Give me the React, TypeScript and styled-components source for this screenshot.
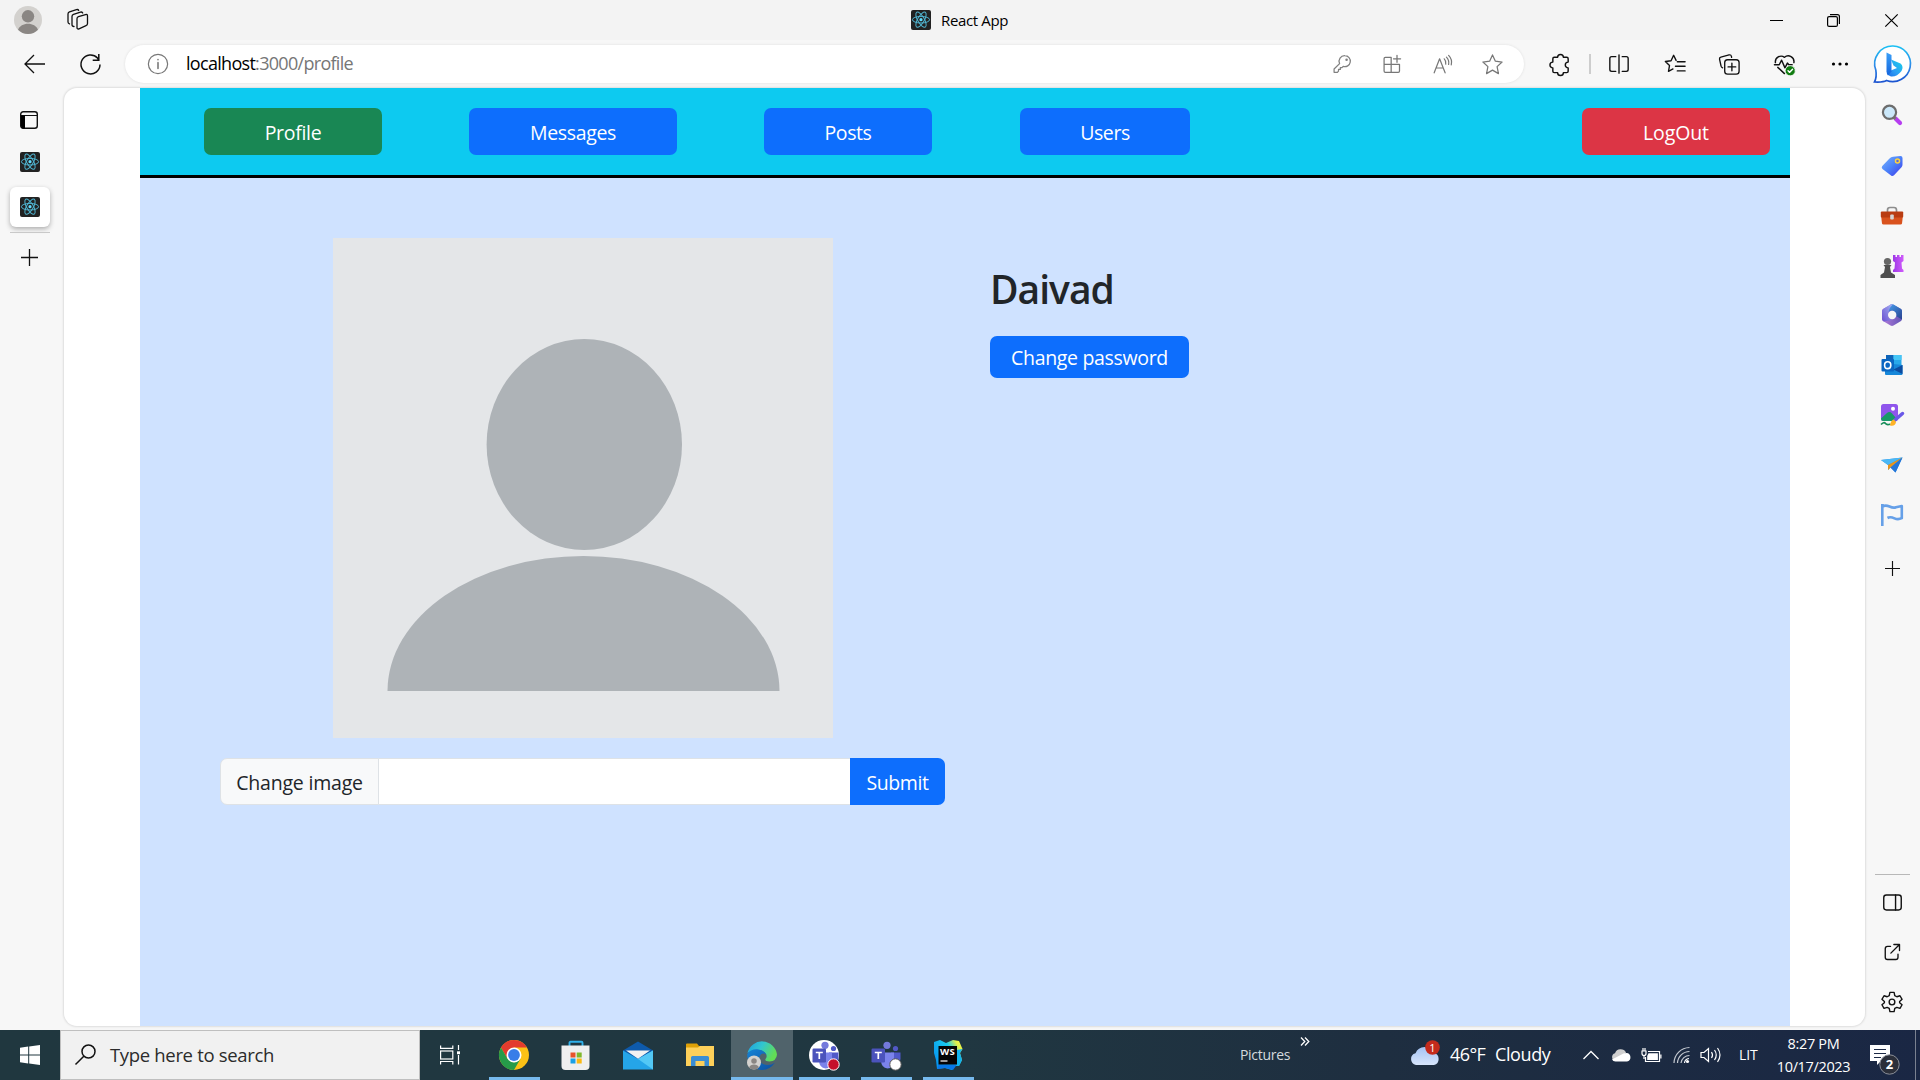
import React from "react";
import styled, { createGlobalStyle } from "styled-components";

const GlobalStyle = createGlobalStyle`
  *, *::before, *::after { box-sizing: border-box; }
  html, body { margin: 0; padding: 0; overflow: hidden; }
  body {
    font-family: "Segoe UI", "Open Sans", "Noto Sans", sans-serif;
    color: #000;
  }
  button, input { font-family: inherit; }
  svg { display: block; flex: none; overflow: visible; }
`;

const Screen = styled.div`
  width: 1920px;
  height: 1080px;
  display: flex;
  flex-direction: column;
  background: #f7f7f7;
`;

const Slot = styled.div<{ $w?: number; $h?: number }>`
  width: ${(p) => (p.$w ? p.$w + "px" : "auto")};
  height: ${(p) => (p.$h ? p.$h + "px" : "auto")};
  flex: none;
  display: flex;
  align-items: center;
  justify-content: center;
`;

/* ---------- title bar ---------- */
const TitleBar = styled.header`
  height: 40px;
  flex: none;
  display: flex;
  align-items: center;
  background: #f3f3f3;
`;
const TitleSide = styled.div<{ $right?: boolean }>`
  width: 911px;
  display: flex;
  align-items: center;
  justify-content: ${(p) => (p.$right ? "flex-end" : "flex-start")};
  ${(p) => (p.$right ? "flex: 1; width: auto;" : "flex: none; padding-left: 14px; gap: 25px;")}
`;
const PageTitle = styled.div`
  display: flex;
  align-items: center;
  gap: 10px;
  font-size: 15px;
  letter-spacing: -0.35px;
  white-space: nowrap;
`;

/* ---------- toolbar ---------- */
const Toolbar = styled.div`
  height: 48px;
  flex: none;
  display: flex;
  align-items: center;
  background: #f7f7f7;
`;
const AddressBar = styled.div`
  height: 38px;
  width: 1399px;
  margin: 0 11px 0 6px;
  padding: 0 7px 0 22px;
  display: flex;
  align-items: center;
  background: #fff;
  border-radius: 19px;
  box-shadow: 0 0 3px rgba(0, 0, 0, 0.1);
`;
const Url = styled.div`
  flex: 1;
  margin-left: 17px;
  padding-bottom: 2px;
  font-size: 18px;
  letter-spacing: -0.7px;
  color: #767676;
  span { color: #000; }
`;
const ToolDivider = styled.div`
  width: 2px;
  height: 20px;
  margin-left: 4px;
  background: #cdcdcd;
`;

/* ---------- middle ---------- */
const Middle = styled.div`
  height: 942px;
  flex: none;
  display: flex;
`;
const TabRail = styled.nav`
  width: 64px;
  flex: none;
  display: flex;
  flex-direction: column;
  padding: 9px 0 0 10px;
`;
const Tab = styled.div<{ $active?: boolean }>`
  width: 40px;
  height: 40px;
  display: flex;
  align-items: center;
  justify-content: center;
  border-radius: 6px;
  ${(p) => p.$active && "background: #fff; margin-top: 5px; box-shadow: 0 2px 5px rgba(0,0,0,.3);"}
`;
const TabLine = styled.div`
  width: 40px;
  height: 1px;
  margin: 5px 0 4px;
  background: #c9c9c9;
`;
const Viewport = styled.div`
  width: 1801px;
  height: 938px;
  flex: none;
  padding: 0 75px 0 76px;
  background: #fff;
  border-radius: 13px;
  box-shadow: 0 0 2px 1px rgba(0, 0, 0, 0.1);
`;
const Page = styled.div`
  height: 100%;
  background: #cfe2ff;
  color: #212529;
`;
const SideRail = styled.aside`
  flex: 1;
  display: flex;
  flex-direction: column;
  align-items: center;
  padding-right: 1px;
  padding-top: 1px;
`;
const RailLine = styled.div`
  width: 35px;
  height: 1px;
  flex: none;
  margin: 277px 0 2px;
  background: #b8b8b8;
`;

/* ---------- web page ---------- */
const Navbar = styled.div`
  height: 90px;
  display: flex;
  align-items: flex-start;
  padding: 20px 20px 0 64px;
  background: #0dcaf0;
  border-bottom: 3px solid #000;
`;
const Btn = styled.button<{ $w: number; $h?: number; $bg?: string; $ml?: string; $gap?: number }>`
  width: ${(p) => p.$w}px;
  height: ${(p) => p.$h ?? 47}px;
  margin-left: ${(p) => p.$ml ?? 0};
  padding: ${(p) => (p.$h ? 0 : 2)}px 0 0;
  flex: none;
  border: 0;
  border-radius: 7px;
  background: ${(p) => p.$bg ?? "#0d6efd"};
  color: #fff;
  font-size: 19.5px;
  letter-spacing: ${(p) => p.$gap ?? -0.4}px;
`;
const ProfileBody = styled.main`
  display: flex;
  padding: 60px 0 0 80px;
`;
const PhotoColumn = styled.section`
  width: 725px;
  display: flex;
  flex-direction: column;
  align-items: center;
  gap: 20px;
`;
const Photo = styled.div`
  width: 500px;
  height: 500px;
  margin-left: 1px;
  background: #e4e6e8;
`;
const ImageForm = styled.form`
  width: 725px;
  display: flex;
`;
const FormLabel = styled.label`
  width: 159px;
  height: 47px;
  display: flex;
  align-items: center;
  justify-content: center;
  border: 1px solid #dee2e6;
  border-radius: 7px 0 0 7px;
  background: #f8f9fa;
  font-size: 19.5px;
  letter-spacing: -0.2px;
  padding-top: 2px;
`;
const FileInput = styled.input`
  flex: 1;
  min-width: 0;
  height: 47px;
  border: solid #dee2e6;
  border-width: 1px 0;
  border-radius: 0;
  background: #fff;
  outline: 0;
`;
const Submit = styled(Btn)`
  border-radius: 0 7px 7px 0;
`;
const InfoColumn = styled.section`
  padding: 22px 0 0 45px;
  display: flex;
  flex-direction: column;
  align-items: flex-start;
`;
const UserName = styled.h1`
  margin: 0 0 18px;
  height: 58px;
  line-height: 57px;
  font-size: 39px;
  font-weight: 600;
  letter-spacing: -1px;
`;

/* ---------- taskbar ---------- */
const Taskbar = styled.footer`
  height: 50px;
  flex: none;
  display: flex;
  color: #fff;
  background: linear-gradient(90deg, #20373f 0%, #203741 50%, #1e2e40 72%, #1a2744 100%);
`;
const SearchBox = styled.div`
  width: 360px;
  display: flex;
  align-items: center;
  padding: 0 0 2px 14px;
  gap: 14px;
  background: #f1f1f1;
  border: 1px solid #bfbfbf;
  color: #2b2b2b;
  font-size: 18.5px;
  letter-spacing: -0.33px;
`;
const TaskItem = styled.div<{ $open?: boolean; $active?: boolean }>`
  width: 62px;
  display: flex;
  flex-direction: column;
  align-items: center;
  justify-content: space-between;
  padding-top: 10px;
  background: ${(p) => (p.$active ? "#50636b" : "transparent")};
  &::after {
    content: "";
    height: 3px;
    width: ${(p) => (p.$active ? 62 : 51)}px;
    background: ${(p) => (p.$open || p.$active ? "#76b9ed" : "transparent")};
  }
`;
const Spacer = styled.div`
  flex: 1;
`;
const TrayText = styled.div<{ $w: number; $size: number; $gap?: number; $color?: string }>`
  width: ${(p) => p.$w}px;
  flex: none;
  align-self: center;
  padding-bottom: 2px;
  font-size: ${(p) => p.$size}px;
  letter-spacing: ${(p) => p.$gap ?? -0.4}px;
  color: ${(p) => p.$color ?? "#fff"};
  white-space: pre;
`;
const More = styled.div`
  width: 100px;
  padding-top: 7px;
`;
const Clock = styled.div`
  width: 95px;
  display: flex;
  flex-direction: column;
  align-items: center;
  padding-top: 2px;
  font-size: 14.5px;
  line-height: 23px;
  letter-spacing: -0.35px;
`;
const DesktopEdge = styled.div`
  width: 5px;
  border-left: 1px solid #7a8190;
`;

/* ---------- icons ---------- */
type IconProps = { size?: number; color?: string; sw?: number; children: React.ReactNode };
const Line = ({ size = 24, color = "#111", sw = 1.3, children }: IconProps) => (
  <svg width={size} height={size} viewBox="0 0 24 24" fill="none" stroke={color} strokeWidth={sw} strokeLinecap="round" strokeLinejoin="round">
    {children}
  </svg>
);

const ReactLogo = () => (
  <svg width="20" height="20" viewBox="0 0 20 20">
    <rect width="20" height="20" rx="2" fill="#222" />
    <g fill="none" stroke="#4fb3cf" strokeWidth="1">
      <ellipse cx="10" cy="9.700" rx="8.600" ry="3.300" />
      <ellipse cx="10" cy="9.700" rx="8.600" ry="3.300" transform="rotate(60 10 9.700)" />
      <ellipse cx="10" cy="9.700" rx="8.600" ry="3.300" transform="rotate(120 10 9.700)" />
    </g>
    <circle cx="10" cy="9.700" r="1.600" fill="#61dafb" />
  </svg>
);

const Account = ({ size = 28 }: { size?: number }) => (
  <svg width={size} height={size} viewBox="0 0 28 28">
    <circle cx="14" cy="14" r="14" fill="#d3d1ce" />
    <circle cx="14" cy="10.300" r="6.200" fill="#8a8683" />
    <path d="M4 23.800C5.500 20 9.500 17.800 14 17.800S22.500 20 24 23.800A14 14 0 0 1 4 23.800Z" fill="#8a8683" />
  </svg>
);

const Workspaces = () => (
  <svg width="22" height="22" viewBox="0 0 22 22" fill="none" stroke="#111" strokeWidth="1.300" strokeLinecap="round" strokeLinejoin="round">
    <path d="M11.500 7.700 18.500 5.600Q20.500 5 20.500 7V14.500Q20.500 16 19 16.600L12 19.800Q10 20.500 10 18.500V9.700Q10 8.200 11.500 7.700Z" />
    <path d="M7 17.500Q5 17.500 5 15.700V7.500Q5 6 6.500 5.400L13.500 3.100Q15.300 2.600 15.700 4" />
    <path d="M2.500 14.800Q1 14.500 1 13V5Q1 3.500 2.500 2.900L9.500.6Q11.200.2 11.700 1.500" />
  </svg>
);

const Key = () => (
  <Line size={20} color="#808080" sw={1.5}>
    <path d="M15.500 2A6.600 6.600 0 1 1 13.400 14.900L12 16.300H10V18.500H7.800V20.600L6.500 22H2.500V18L9.100 11.500A6.700 6.700 0 0 1 15.500 2Z" />
    <circle cx="17.500" cy="6.800" r=".8" fill="#808080" />
  </Line>
);
const AppsAdd = () => (
  <Line size={20} color="#777" sw={1.5}>
    <path d="M11 12.500V4H4Q2.500 4 2.500 5.500V20.500Q2.500 22 4 22H19.500Q21 22 21 20.500V12.500H2.500M11 12.500V22M18 1.500V10M13.800 5.700H22.300" />
  </Line>
);
const ReadAloud = () => (
  <Line size={21} color="#777" sw={1.4}>
    <path d="M2.500 21.500 8.700 5.500 15 21.500M4.800 16H12.800M14 5.500Q16.400 8 15.700 11.500M16.500 3.500Q20 7 19 12M19 1.500Q23.500 6 22 12.500" />
  </Line>
);
const Star = () => (
  <Line size={23} color="#777" sw={1.3}>
    <path d="M12 2 15 8.600 22 9.400 16.800 14.200 18.200 21.500 12 17.900 5.800 21.500 7.200 14.200 2 9.400 9 8.600Z" />
  </Line>
);
const Puzzle = () => (
  <Line size={23} sw={1.5}>
    <path d="M5.500 4.500H9A3 3 0 0 1 15 4.500H18.500Q20 4.500 20 6V9.500A3 3 0 0 0 20 15.500V19Q20 20.500 18.500 20.500H15A3 3 0 0 1 9 20.500H5.500Q4 20.500 4 19V15.500A3 3 0 0 1 4 9.500V6Q4 4.500 5.500 4.500Z" />
  </Line>
);
const SplitScreen = () => (
  <Line size={22} sw={1.5}>
    <path d="M12 2V22M8.500 4H4Q2 4 2 6V18Q2 20 4 20H8.500M15.500 4H20Q22 4 22 6V18Q22 20 20 20H15.500" />
  </Line>
);
const Favorites = () => (
  <Line size={22} sw={1.5}>
    <path d="M13.200 8 10.500 2.500 7.700 8.400 1.500 9.300 6 13.700 4.900 20 9.800 17.400M14.500 9.500H23M12.500 14.500H23M14.500 19.500H23" />
  </Line>
);
const Collections = () => (
  <Line size={23} sw={1.4}>
    <path d="M4.800 15.500Q3.600 15 3.200 13.700L1.600 6.500Q1.200 4.700 3 4.200L11.500 2Q13.500 1.500 14 3.500L14.200 4.500" />
    <rect x="7" y="7" width="15" height="15" rx="3" />
    <path d="M14.500 10.500V18.500M10.500 14.500H18.500" />
  </Line>
);
const Heart = () => (
  <Line size={23} sw={1.5}>
    <path d="M2.500 10A6 6 0 0 1 12 4.500 6 6 0 0 1 21.800 10M5 15 12 21.500M1.500 12.300H6.500L9 7.500 12.500 15.500 15 10.500 16.500 12.300H20" />
    <circle cx="18" cy="18.500" r="5.300" fill="#107c10" stroke="#f7f7f7" strokeWidth=".8" />
    <path d="M15.700 18.600 17.400 20.200 20.400 17" stroke="#fff" />
  </Line>
);
const Dots = () => (
  <svg width="18" height="4" viewBox="0 0 18 4"><circle cx="2.500" cy="2" r="1.600" /><circle cx="9" cy="2" r="1.600" /><circle cx="15.500" cy="2" r="1.600" /></svg>
);
const Bing = () => (
  <svg width="40" height="40" viewBox="0 0 40 40">
    <defs>
      <linearGradient id="bingRing" x1="0" y1="0" x2="0" y2="1"><stop offset="0" stopColor="#1cc0f3" /><stop offset=".55" stopColor="#2f8be8" /><stop offset="1" stopColor="#1b53d0" /></linearGradient>
      <linearGradient id="bingStem" x1="0" y1="0" x2="0" y2="1"><stop offset="0" stopColor="#3aa0f8" /><stop offset="1" stopColor="#1465dd" /></linearGradient>
      <linearGradient id="bingBowl" x1="1" y1="0" x2="0" y2="1"><stop offset="0" stopColor="#19d3e8" /><stop offset=".6" stopColor="#2c9df5" /><stop offset="1" stopColor="#1c6de5" /></linearGradient>
    </defs>
    <path d="M20 2A17.800 17.800 0 1 1 13.500 36.500Q10 38.500 1.500 38Q4 33 2.800 26A17.800 17.800 0 0 1 20 2Z" fill="#fff" stroke="url(#bingRing)" strokeWidth="1.700" />
    <path d="M18 15.500 27.500 19.500Q31 22.500 28.500 27Q24 33 18 32.500Q14.500 31.500 14 28L24 24 20.500 21.500Z" fill="url(#bingBowl)" />
    <path d="M13.500 8.500 18.500 11V27.500L15 31.500Q13.500 29.500 13.500 27.500Z" fill="url(#bingStem)" />
  </svg>
);

const Magnifier = () => (
  <svg width="22" height="22" viewBox="0 0 22 22">
    <path d="M14.500 14.500 19 19" stroke="#b63df0" strokeWidth="4.200" strokeLinecap="round" />
    <path d="M12 12.500 14.500 15" stroke="#777" strokeWidth="3" />
    <circle cx="8.500" cy="8.300" r="6.600" fill="#cbe8fa" stroke="#6d6d6d" strokeWidth="2.200" />
  </svg>
);
const Tag = () => (
  <svg width="22" height="22" viewBox="0 0 22 22">
    <defs><linearGradient id="tagFill" x1="0" y1="0" x2="1" y2="1"><stop stopColor="#7ab5fb" /><stop offset=".5" stopColor="#4b82fa" /><stop offset="1" stopColor="#3f36e8" /></linearGradient></defs>
    <path d="M12 1.800 19.500 1Q21.500 1 21.500 3V9.500Q21.500 11 20.500 12.300L13 20.300Q11.500 21.700 10 20.500L1.500 14Q0 12.700 1.300 11L8.500 3.500Q10 2 12 1.800Z" fill="url(#tagFill)" />
    <circle cx="16.500" cy="6" r="2" fill="#5a6bd8" stroke="#ffd23e" strokeWidth="1.500" />
  </svg>
);
const Toolbox = () => (
  <svg width="24" height="20" viewBox="0 0 24 20">
    <path d="M7.500 6V4Q7.500 1.500 10 1.500H14Q16.500 1.500 16.500 4V6" fill="none" stroke="#8d8d8d" strokeWidth="1.700" />
    <path d="M1 9H23L22 17.500Q21.800 18.500 20.500 18.500H3.500Q2.200 18.500 2 17.500Z" fill="#d9521d" />
    <rect x=".8" y="5.500" width="22.400" height="6" rx="1" fill="#b93c12" />
    <rect x="10.200" y="8.500" width="3.600" height="5" rx="1" fill="#d5d5d5" />
  </svg>
);
const Chess = () => (
  <svg width="24" height="24" viewBox="0 0 24 24">
    <defs><linearGradient id="rook" x1="0" x2="1"><stop stopColor="#9d38e6" /><stop offset="1" stopColor="#d05cfb" /></linearGradient></defs>
    <path d="M13 1H15.500V3H17V1H19.500V3H21V1H23.500V7L21.500 8.500 22 14.500 23.500 16V18H13V16L14.500 14.500 15 8.500 13 7Z" fill="url(#rook)" />
    <circle cx="7.500" cy="7.500" r="3.600" fill="#666" />
    <path d="M3.500 11H11.500L10 13 11 18.500 15 21V24H.5V21L4 18.500 5 13Z" fill="#4f4f4f" />
  </svg>
);
const M365 = () => (
  <svg width="22" height="22" viewBox="0 0 22 22">
    <defs>
      <linearGradient id="mA" x1="0" y1="1" x2="1" y2="0"><stop stopColor="#6a4fd0" /><stop offset="1" stopColor="#a5b5f5" /></linearGradient>
      <linearGradient id="mB" x1="0" y1="0" x2="1" y2="1"><stop stopColor="#45a1ef" /><stop offset="1" stopColor="#29418f" /></linearGradient>
      <linearGradient id="mC" x1="0" x2="1"><stop stopColor="#b57dd9" /><stop offset="1" stopColor="#6355b8" /></linearGradient>
    </defs>
    <path d="M11 0 20 5Q21 5.800 21 7V15Q21 16.200 20 17L12.500 21.500Q11 22.300 9.500 21.500L2 17Q1 16.200 1 15V7Q1 5.800 2 5Z" fill="url(#mC)" />
    <path d="M9.500.6Q11-.2 12.500.6L20 5Q21 5.800 21 7V15.500L15 12V9L11 6.500 6.500 8Z" fill="url(#mB)" />
    <path d="M9.500.6 12 0Q8 4 7.500 8V14L11 16 3 17.600 2 17Q1 16.200 1 15V7Q1 5.800 2 5Z" fill="url(#mA)" />
    <circle cx="11.200" cy="11" r="4.200" fill="#f7f7f7" />
  </svg>
);
const Outlook = () => (
  <svg width="22" height="22" viewBox="0 0 22 22">
    <path d="M5 1H20.500V13H5Z" fill="#28a8ea" /><path d="M5 1H12.500V6H5Z" fill="#0f64b8" /><path d="M12.500 1H20.500V6H12.500Z" fill="#46c6f6" />
    <path d="M4 9 21.500 11V20Q21.500 21 20.500 21H5Q4 21 4 20Z" fill="#1687d9" /><path d="M21.500 11V20L12.500 15.500Z" fill="#0c4ca0" />
    <rect x=".5" y="5" width="12.500" height="12.500" rx="1" fill="#0a66c2" />
    <ellipse cx="6.700" cy="11.200" rx="3.100" ry="3.400" fill="none" stroke="#fff" strokeWidth="1.600" />
  </svg>
);
const Designer = () => (
  <svg width="24" height="23" viewBox="0 0 24 23">
    <rect x="1" y="0" width="17" height="17" rx="2.500" fill="#8f55ec" /><circle cx="13" cy="4.700" r="2" fill="#fff" />
    <path d="M1 14.500 7 9Q9.500 7 12 9.500L17 15Q17 17 15 17H3Q1 17 1 14.500Z" fill="#189a68" />
    <path d="M1 20.500Q4 17.500 5.500 19.500T10.500 20" fill="none" stroke="#168c58" strokeWidth="1.700" />
    <path d="M15 16 22.500 9.500" stroke="#6a58e8" strokeWidth="3.500" strokeLinecap="round" /><path d="M10 21.500Q11 15.500 14 15.500L16 18Q15.500 22.500 10 21.500Z" fill="#ffb326" />
  </svg>
);
const Plane = () => (
  <svg width="22" height="16" viewBox="0 0 22 16">
    <path d="M0 3 21.500.5 14.500 15.500 9.500 10.500 7 13V8Z" fill="#2a8ee8" /><path d="M0 3 21.500.5 7 8Z" fill="#4bb8f5" /><path d="M21.500.5 7 8V13L9.500 10.500Z" fill="#e8951b" /><path d="M21.500.5 9.500 10.500 14.500 15.500Z" fill="#2475d8" />
  </svg>
);
const Flag = () => (
  <svg width="22" height="22" viewBox="0 0 22 22" fill="none" stroke="#66a0e8" strokeWidth="2.600" strokeLinejoin="round"><path d="M1.300 0V22M1.300 2.500Q4.500.7 8.500 2.500T15 3.200L20.800 2V14.200Q17 16 13.500 14.300T7.500 13.500L6.500 14" /></svg>
);
const Plus = ({ size = 17 }: { size?: number }) => (
  <svg width={size} height={size} viewBox="0 0 17 17"><path d="M8.500 0V17M0 8.500H17" stroke="#111" strokeWidth="1.300" /></svg>
);

const Gear = () => (
  <svg width="22" height="22" viewBox="0 0 24 24" fill="none" stroke="#111" strokeWidth="1.500" strokeLinejoin="round">
    <circle cx="12" cy="12" r="3.100" />
    <path d="M9.700 1.500H14.300L15 5 17.300 6.300 20.700 5.200 23 9.100 20.300 11.500V12.800L23 15 20.700 18.900 17.300 17.800 15 19 14.300 22.500H9.700L9 19 6.700 17.800 3.300 18.900 1 15 3.700 12.800V11.500L1 9.100 3.300 5.200 6.700 6.300 9 5Z" />
  </svg>
);

const WinLogo = () => (
  <svg width="20" height="20" viewBox="0 0 20 20" fill="#fff"><path d="M0 2.800 8.200 1.600V9.500H0ZM9.200 1.500 20 0V9.500H9.200ZM0 10.500H8.200V18.400L0 17.200ZM9.200 10.500H20V20L9.200 18.500Z" /></svg>
);
const TaskView = () => (
  <svg width="20" height="20" viewBox="0 0 20 20" fill="none" stroke="#fff" strokeWidth="1.200"><path d="M.6.500V3.300H12.800V.5M.6 19.500V16.500H12.800V19.500M18.500 0V5M18.500 10V19.500" /><rect x=".6" y="6" width="12.200" height="8" /><path d="M17 6.300H20V9.200H17Z" fill="#fff" stroke="none" /></svg>
);
const Chrome = () => (
  <svg width="30" height="30" viewBox="0 0 30 30">
    <circle cx="15" cy="15" r="15" fill="#fbc116" />
    <path d="M2 7.500A15 15 0 0 1 28 7.500H15L8.500 18.750Z" fill="#e33b2e" />
    <path d="M2 7.500A15 15 0 0 0 15 30L21.500 18.750 15 22.500 8.500 18.750Z" fill="#269b49" />
    <circle cx="15" cy="15" r="7.500" fill="#fff" /><circle cx="15" cy="15" r="5.900" fill="#387de8" />
  </svg>
);
const Store = () => (
  <svg width="30" height="30" viewBox="0 0 30 30">
    <path d="M8.500 6V2.800Q8.500 1.800 9.500 1.800H20.500Q21.500 1.800 21.500 2.800V6" fill="none" stroke="#30b1ea" strokeWidth="1.900" />
    <path d="M.5 5.500H28.500V26Q28.500 30 24.500 30H4.500Q.5 30 .5 26Z" fill="#efefef" />
    <path d="M9.500 12.500H14.500V17.500H9.500Z" fill="#e8532b" /><path d="M15.700 12.500H20.700V17.500H15.700Z" fill="#80b82b" /><path d="M9.500 18.500H14.500V23.500H9.500Z" fill="#1ba0e5" /><path d="M15.700 18.500H20.700V23.500H15.700Z" fill="#fbb911" />
  </svg>
);
const Mail = () => (
  <svg width="30" height="30" viewBox="0 0 30 30"><path d="M0 10.500 15 1.500 30 10.500V20H0Z" fill="#0e5aab" /><path d="M0 10.500 15 19 30 10.500V29.500H0Z" fill="#25a5e8" /><path d="M30 10.500V29.500L15 19Z" fill="#53c8f5" /><path d="M3 10.500H27L15 18.800Z" fill="#f2f2f2" /></svg>
);
const Folder = () => (
  <svg width="28" height="30" viewBox="0 0 28 30"><path d="M0 4.500Q0 3.500 1 3.500H11L13 6H27Q28 6 28 7V12H0Z" fill="#dda007" /><path d="M0 7.500H12L14 6H28V26H0Z" fill="#fdd05a" /><path d="M5 26V17.500Q5 16 6.500 16H21.500Q23 16 23 17.500V26H18.500V21H9.500V26Z" fill="#3b8ed3" /></svg>
);
const Edge = () => (
  <svg width="30" height="30" viewBox="0 0 30 30">
    <defs>
      <linearGradient id="edgeTop" x1="0" y1="0" x2="1" y2=".4"><stop stopColor="#1d9ee0" /><stop offset=".5" stopColor="#32c6cf" /><stop offset="1" stopColor="#62dc55" /></linearGradient>
      <linearGradient id="edgeLow" x1="0" y1="0" x2="1" y2="1"><stop stopColor="#1583d6" /><stop offset="1" stopColor="#0d4fa0" /></linearGradient>
    </defs>
    <path d="M.5 13A15 15 0 0 1 30 14.500Q29.500 21 22.500 21.500Q17.500 21.300 18.500 19Q20.500 16.500 19 14Q12 6 .5 13Z" fill="url(#edgeTop)" />
    <path d="M.3 14Q4 8.500 11.500 9.500Q18 10.500 19.500 15Q15 11.500 12.500 16.500Q11 24 20.500 25Q25 25 28 22.500Q23 30 14.500 30A15 15 0 0 1 .3 14Z" fill="url(#edgeLow)" />
    <g transform="translate(0 15.500) scale(.5)"><circle cx="14" cy="14" r="14" fill="#d3d1ce" /><circle cx="14" cy="11" r="5.500" fill="#8a8683" /><path d="M4 23.800C5.500 20 9.500 18 14 18S22.500 20 24 23.800A14 14 0 0 1 4 23.800Z" fill="#8a8683" /></g>
  </svg>
);
const Teams = ({ disc }: { disc?: boolean }) => (
  <svg width="30" height="30" viewBox="0 0 30 30">
    {disc && <circle cx="15" cy="15" r="15" fill="#fff" />}
    <circle cx="16" cy="5.300" r="3.600" fill="#7479dc" /><circle cx="24.500" cy="8.500" r="2.600" fill="#5158c6" />
    <path d="M20 12.500H29.500V19Q29 24 24 24Q20 23.500 20 19Z" fill="#5059c9" /><path d="M10 12.500H23V21Q22.500 28.500 16.500 28.500Q10.500 28 10 21Z" fill="#7b83eb" />
    <rect x={disc ? 3.5 : 0.5} y="8.500" width="13.500" height="14" rx="1.200" fill="#4b53bc" />
    <path d={disc ? "M6.800 12.500H13.800M10.300 12.500V19" : "M3.800 12.500H10.800M7.300 12.500V19"} stroke="#fff" strokeWidth="1.700" />
    <circle cx="24.500" cy="24.500" r="5.700" fill={disc ? "#c50f2b" : "#fff"} stroke={disc ? "#fff" : "#555"} strokeWidth="1" />
  </svg>
);
const WsMark = styled.text`
  font: 700 9.5px "Open Sans", sans-serif;
  letter-spacing: 0.2px;
  fill: #fff;
`;
const WebStorm = () => (
  <svg width="30" height="30" viewBox="0 0 30 30">
    <defs><linearGradient id="wsFill" x1="0" y1=".6" x2="1" y2="0"><stop stopColor="#0795ef" /><stop offset=".55" stopColor="#18cbee" /><stop offset=".8" stopColor="#e2f04a" /><stop offset="1" stopColor="#fbf845" /></linearGradient></defs>
    <path d="M1 2 7 0 13 3 20 0 26 1 29.500 9 27 13 29 20 26 26 20 26 19 30 12 28 4 29 3 20 1 13Z" fill="url(#wsFill)" /><path d="M5.500 24.500H24L20 30 12 28 4 29Z" fill="#0878e8" /><path d="M24 10 29.500 9 27 13 29 20 26 26H24Z" fill="#12b4ee" />
    <rect x="5.500" y="6" width="18.500" height="18.500" fill="#050505" /><WsMark x="7" y="15">WS</WsMark><path d="M7.500 21H14.500" stroke="#fff" strokeWidth="1.200" />
  </svg>
);
const BadgeText = styled.text<{ $bold?: boolean }>`
  font: ${(p) => (p.$bold ? "700 13px" : "400 11px")} "Open Sans", sans-serif;
  fill: #fff;
  text-anchor: middle;
`;
const Weather = () => (
  <svg width="31" height="30" viewBox="0 0 31 30">
    <defs><linearGradient id="cloud" x1="0" y1="0" x2="0" y2="1"><stop stopColor="#a4c3f4" /><stop offset="1" stopColor="#d7e5fb" /></linearGradient></defs>
    <path d="M6 25A6 6 0 0 1 5.500 13.300 10 10 0 0 1 24 13 6.200 6.200 0 0 1 24 25Z" fill="url(#cloud)" />
    <circle cx="22.500" cy="7.500" r="7.300" fill="#c42b1c" /><BadgeText x="22.500" y="11.500">1</BadgeText>
  </svg>
);
const Cloud = () => (
  <svg width="20" height="14" viewBox="0 0 20 14"><path d="M4.500 13A4 4 0 0 1 4 5.200 6 6 0 0 1 15 4.500L12 10Z" fill="#cfcfcf" /><path d="M4.500 13.500A4 4 0 0 1 1 11.500L12.500 5.500 15.500 5A4.300 4.300 0 0 1 16 13.500Z" fill="#fff" /></svg>
);
const Battery = () => (
  <svg width="21" height="15" viewBox="0 0 21 15" fill="none" stroke="#fff" strokeWidth="1.200"><path d="M7 3.500H18.500V13.500H4.500V9M19.900 6.500V10.500M1 3H5V5.500Q5 7.500 3 7.500T1 5.500ZM2 0V3M4 0V3M3 7.500V11" /><path d="M7.500 5.200H16.900V11.900H6.200V8Z" fill="#fff" stroke="none" /></svg>
);
const Wifi = () => (
  <svg width="17" height="18" viewBox="0 0 17 18" fill="none" stroke="#c4c9d1" strokeWidth="1.200"><path d="M1 17A16 16 0 0 1 16.500 1.500M4.500 17A12 12 0 0 1 16.500 5.500M8 17A8.500 8.500 0 0 1 16.500 9.500" /><path d="M11.500 17A5 5 0 0 1 16 12.500" stroke="#fff" /><circle cx="14.500" cy="15.500" r="1.600" fill="#fff" stroke="none" /></svg>
);
const Volume = () => (
  <svg width="22" height="18" viewBox="0 0 22 18" fill="none" stroke="#fff" strokeWidth="1.200"><path d="M1 6.500H4L8.500 2.500V15.500L4 11.500H1Z" /><path d="M11.500 6Q13.500 9 11.500 12M14.500 4Q18 9 14.500 14M17.500 2Q22.500 9 17.500 16" /></svg>
);
const Notifications = () => (
  <svg width="32" height="32" viewBox="0 0 32 32">
    <path d="M0 6H20V22H11L7 26V22H0Z" fill="#fff" /><path d="M4 10.500H16M4 14.500H16M4 18.500H11" stroke="#1c2945" strokeWidth="1.200" />
    <circle cx="19.500" cy="25.500" r="9.700" fill="#2b2f3a" stroke="#8b8f98" strokeWidth="1" /><BadgeText $bold x="19.500" y="30.200">2</BadgeText>
  </svg>
);

const NAV = [
  { label: "Profile", w: 178, bg: "#198754", ml: "0", gap: -0.3 },
  { label: "Messages", w: 208, ml: "87px", gap: -0.35 },
  { label: "Posts", w: 168, ml: "87px", gap: -0.4 },
  { label: "Users", w: 170, ml: "88px", gap: -0.4 },
  { label: "LogOut", w: 188, bg: "#dc3545", ml: "auto", gap: -0.1 },
];

export default function App() {
  return (
    <>
      <GlobalStyle />
      <Screen>
        <TitleBar>
          <TitleSide><Account /><Workspaces /></TitleSide>
          <PageTitle><ReactLogo />React App</PageTitle>
          <TitleSide $right>
            <Slot $w={57}><svg width="13" height="1"><rect width="13" height="1" /></svg></Slot>
            <Slot $w={57}>
              <svg width="13" height="13" viewBox="0 0 13 13" fill="none" stroke="#000" strokeWidth="1.200"><rect x=".6" y="2.600" width="9.800" height="9.800" rx="1.500" /><path d="M3 .6H10.500Q12.400.6 12.400 2.500V10" /></svg>
            </Slot>
            <Slot $w={58}><svg width="13" height="13" viewBox="0 0 13 13"><path d="M.3.300 12.700 12.700M12.700.300.300 12.700" stroke="#000" strokeWidth="1.200" /></svg></Slot>
          </TitleSide>
        </TitleBar>

        <Toolbar>
          <Slot $w={69}><svg width="21" height="20" viewBox="0 0 21 20" fill="none" stroke="#111" strokeWidth="1.300"><path d="M10 1 1 10 10 19M1 10H21" /></svg></Slot>
          <Slot $w={42}><svg width="21" height="21" viewBox="0 0 21 21" fill="none" stroke="#111" strokeWidth="1.500"><path d="M20 10.500A9.500 9.500 0 1 1 17.500 4L18.800 6M18.800 0V6.200H12.700" /></svg></Slot>
          <Slot $w={8} />
          <AddressBar>
            <Line size={22} color="#777" sw={1.3}><circle cx="12" cy="12" r="10.500" /><path d="M12 10.500V17M12 7V7.300" strokeWidth="1.700" /></Line>
            <Url><span>localhost</span>:3000/profile</Url>
            <Slot $w={50}><Key /></Slot>
            <Slot $w={50}><AppsAdd /></Slot>
            <Slot $w={50}><ReadAloud /></Slot>
            <Slot $w={50}><Star /></Slot>
          </AddressBar>
          <Slot $w={50}><Puzzle /></Slot>
          <ToolDivider />
          <Slot $w={56}><SplitScreen /></Slot>
          <Slot $w={55}><Favorites /></Slot>
          <Slot $w={55}><Collections /></Slot>
          <Slot $w={55}><Heart /></Slot>
          <Slot $w={55}><Dots /></Slot>
          <Slot $w={51}><Bing /></Slot>
        </Toolbar>

        <Middle>
          <TabRail>
            <Slot $w={38} $h={45}>
              <svg width="18" height="18" viewBox="0 0 18 18"><rect x=".7" y=".7" width="16.600" height="16.600" rx="2.500" fill="none" stroke="#111" strokeWidth="1.400" /><path d="M1 4.500H17" stroke="#111" /><path d="M1 4.500H5V17.500H3Q1 17.500 1 15Z" /></svg>
            </Slot>
            <Tab><ReactLogo /></Tab>
            <Tab $active><ReactLogo /></Tab>
            <TabLine />
            <Slot $w={38} $h={40}><Plus /></Slot>
          </TabRail>

          <Viewport>
            <Page>
              <Navbar>
                {NAV.map((n) => (
                  <Btn key={n.label} $w={n.w} $bg={n.bg} $ml={n.ml} $gap={n.gap}>{n.label}</Btn>
                ))}
              </Navbar>
              <ProfileBody>
                <PhotoColumn>
                  <Photo>
                    <svg width="500" height="500" viewBox="0 0 500 500" fill="#aeb3b7">
                      <ellipse cx="251.300" cy="206.500" rx="97.700" ry="105.500" />
                      <path d="M54.500 453A196 135 0 0 1 446.500 453Z" />
                    </svg>
                  </Photo>
                  <ImageForm>
                    <FormLabel>Change image</FormLabel>
                    <FileInput />
                    <Submit type="button" $w={95}>Submit</Submit>
                  </ImageForm>
                </PhotoColumn>
                <InfoColumn>
                  <UserName>Daivad</UserName>
                  <Btn $w={199} $h={42} $gap={-0.32}>Change password</Btn>
                </InfoColumn>
              </ProfileBody>
            </Page>
          </Viewport>

          <SideRail>
            <Slot $h={51}><Magnifier /></Slot>
            <Slot $h={51}><Tag /></Slot>
            <Slot $h={50}><Toolbox /></Slot>
            <Slot $h={49}><Chess /></Slot>
            <Slot $h={50}><M365 /></Slot>
            <Slot $h={50}><Outlook /></Slot>
            <Slot $h={50}><Designer /></Slot>
            <Slot $h={50}><Plane /></Slot>
            <Slot $h={50}><Flag /></Slot>
            <Slot $h={57}><Plus size={15} /></Slot>
            <RailLine />
            <Slot $h={50}><Line size={21} sw={1.6}><rect x="2" y="3.500" width="20" height="17" rx="3" /><path d="M15.500 3.500V20.500" /></Line></Slot>
            <Slot $h={50}><Line size={18} sw={1.8}><path d="M10 4.500H6Q3 4.500 3 7.500V19Q3 22 6 22H17Q20 22 20 19V15M10.500 13.500 22 2M14.500 2H22V10" /></Line></Slot>
            <Slot $h={50}><Gear /></Slot>
          </SideRail>
        </Middle>

        <Taskbar>
          <Slot $w={60}><WinLogo /></Slot>
          <SearchBox>
            <svg width="21" height="21" viewBox="0 0 21 21" fill="none" stroke="#111" strokeWidth="1.500"><circle cx="13.500" cy="7.500" r="6.500" /><path d="M8.800 12.200.5 20.500" /></svg>
            Type here to search
          </SearchBox>
          <Slot $w={60}><TaskView /></Slot>
          <Slot $w={3} />
          <TaskItem $open><Chrome /></TaskItem>
          <TaskItem><Store /></TaskItem>
          <TaskItem><Mail /></TaskItem>
          <TaskItem><Folder /></TaskItem>
          <TaskItem $active><Edge /></TaskItem>
          <TaskItem $open><Teams disc /></TaskItem>
          <TaskItem $open><Teams /></TaskItem>
          <TaskItem $open><WebStorm /></TaskItem>
          <Spacer />
          <TrayText $w={60} $size={14} $gap={-0.3} $color="#d5dade">Pictures</TrayText>
          <More><svg width="10" height="9" viewBox="0 0 10 9" fill="none" stroke="#fff" strokeWidth="1.300"><path d="M1 .5 4.800 4.500 1 8.500M5 .5 8.800 4.500 5 8.500" /></svg></More>
          <Slot $w={50}><Weather /></Slot>
          <TrayText $w={45} $size={18} $gap={-0.6}>46°F</TrayText>
          <TrayText $w={80} $size={18} $gap={-0.4}>Cloudy</TrayText>
          <Slot $w={32}><svg width="16" height="10" viewBox="0 0 16 10" fill="none" stroke="#fff" strokeWidth="1.300"><path d="M.5 9 8 1.500 15.500 9" /></svg></Slot>
          <Slot $w={28}><Cloud /></Slot>
          <Slot $w={32}><Battery /></Slot>
          <Slot $w={29}><Wifi /></Slot>
          <Slot $w={29}><Volume /></Slot>
          <Slot $w={14} />
          <TrayText $w={27} $size={14} $gap={-0.1}>LIT</TrayText>
          <Clock><span>8:27 PM</span><span>10/17/2023</span></Clock>
          <Slot $w={49}><Notifications /></Slot>
          <Slot $w={5} />
          <DesktopEdge />
        </Taskbar>
      </Screen>
    </>
  );
}
